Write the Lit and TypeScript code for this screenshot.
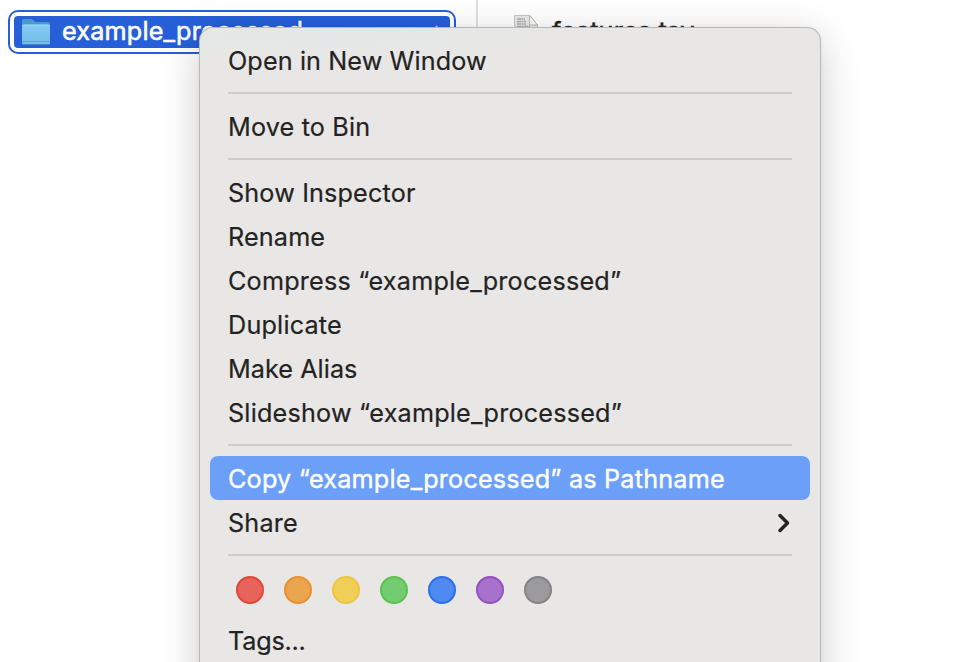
import { LitElement, html, css } from "lit";
import { customElement, property } from "lit/decorators.js";

type Entry = { label: string; spacing?: number; active?: boolean; submenu?: boolean };

const GROUPS: Entry[][] = [
  [{ label: "Open in New Window", spacing: 0.11 }],
  [{ label: "Move to Bin", spacing: 0.17 }],
  [
    { label: "Show Inspector", spacing: 0.15 },
    { label: "Rename", spacing: 0.15 },
    { label: "Compress “example_processed”", spacing: 0.2 },
    { label: "Duplicate", spacing: 0.2 },
    { label: "Make Alias", spacing: 0.05 },
    { label: "Slideshow “example_processed”", spacing: 0.2 },
  ],
  [
    { label: "Copy “example_processed” as Pathname", active: true, spacing: 0.2 },
    { label: "Share", submenu: true, spacing: 0.2 },
  ],
];

@customElement("tag-dots")
class TagDots extends LitElement {
  static styles = css`
    :host { display: flex; gap: 20px; height: 28px; padding: 10px 36px 14px; }
    .dot { width: 28px; height: 28px; box-sizing: border-box; border-radius: 50%; border: 2px solid; }
    .red { background: #e66459; border-color: #e24637; }
    .orange { background: #eba54f; border-color: #e79130; }
    .yellow { background: #efcf58; border-color: #ecc53f; }
    .green { background: #73cc70; border-color: #5bc24d; }
    .blue { background: #4f8af0; border-color: #2c6ef0; }
    .purple { background: #a872cc; border-color: #9550c4; }
    .gray { background: #9b9a9f; border-color: #838387; }
  `;
  render() {
    return ["red", "orange", "yellow", "green", "blue", "purple", "gray"].map(
      (c) => html`<span class="dot ${c}"></span>`
    );
  }
}

@customElement("context-menu")
class ContextMenu extends LitElement {
  @property({ attribute: false }) groups: Entry[][] = [];
  static styles = css`
    :host {
      display: block; box-sizing: border-box; width: 620px; height: 720px; padding-top: 10px;
      border-radius: 13px; color: #232323;
      background: radial-gradient(ellipse 270px 36px at 130px 0, #e4e7e8, #e8e7e500), #e8e7e5;
      box-shadow: 0 0 0 1px #b9b9b9, 0 10px 40px rgba(0, 0, 0, 0.21), 0 0 5px rgba(0, 0, 0, 0.06);
    }
    .row { display: flex; align-items: center; justify-content: space-between; height: 44px; margin: 0 10px; padding: 2px 18px 0; box-sizing: border-box; border-radius: 8px; white-space: pre; -webkit-text-stroke: 0.2px #232323; }
    .active { background: #6b9ff8; color: #fff; -webkit-text-stroke: 0.4px #fff; }
    .line { height: 2px; margin: 10px 28px; background: #cdccca; }
    .chevron { width: 16px; height: 22px; margin: -1px 1px 0 0; }
    .tags { letter-spacing: -0.2px; }
  `;
  render() {
    return html`
      ${this.groups.map(
        (group) => html`
          ${group.map(
            (e) => html`<div class="row ${e.active ? "active" : ""}">
              <span style="letter-spacing:${e.spacing ?? 0}px">${e.label}</span>
              ${e.submenu
                ? html`<svg class="chevron" viewBox="0 0 16 22"><path d="M5 3.500 12.500 11 5 18.500" fill="none" stroke="#232323" stroke-width="3.500" stroke-linecap="round" stroke-linejoin="round" /></svg>`
                : ""}
            </div>`
          )}
          <div class="line"></div>
        `
      )}
      <tag-dots></tag-dots>
      <div class="row"><span class="tags">Tags...</span></div>
    `;
  }
}

@customElement("app-root")
class AppRoot extends LitElement {
  static styles = css`
    :host {
      display: block; position: relative; width: 966px; height: 662px; overflow: hidden;
      background: #fff; color: #232323; font: 25.2px/32px Inter, "Liberation Sans", sans-serif;
    }
    .columns { display: flex; height: 662px; }
    .left { width: 476px; box-sizing: border-box; padding: 10px 20px 0 8px; }
    .right { flex: 1; border-left: 2px solid #dedede; padding: 12px 0 0 34px; }
    .selected { height: 44px; box-sizing: border-box; border: 2px solid #265fd8; border-radius: 10px; padding: 4px; }
    .fill { display: flex; align-items: center; box-sizing: border-box; height: 32px; border-radius: 4px; background: #265fd8; color: #fff; padding: 0 7px; }
    .name { flex: 1; margin: -2px 0 0 11px; letter-spacing: 0.18px; -webkit-text-stroke: 0.6px #fff; }
    .folder { width: 30px; height: 28px; margin-top: -1px; }
    .arrow { width: 8px; height: 14px; }
    .file { display: flex; }
    .doc { width: 28px; height: 34px; margin-top: 2px; }
    .filename { margin: 3px 0 0 12px; letter-spacing: 0.17px; -webkit-text-stroke: 0.5px #232323; }
    context-menu { position: absolute; left: 200px; top: 28px; }
  `;
  render() {
    return html`
      <div class="columns">
        <div class="left">
          <div class="selected"><div class="fill">
            <svg class="folder" viewBox="0 0 30 28">
              <defs><linearGradient id="f" x2="0" y2="1"><stop stop-color="#85cbf3" /><stop offset="1" stop-color="#73bcec" /></linearGradient></defs>
              <path d="M1 25V3q0-2 2-2h7q1 0 2 1l1 1q1 1 2 1h12q2 0 2 2v19z" fill="#479bc9" />
              <rect x="1" y="6.500" width="28" height="20" rx="1.500" fill="url(#f)" />
              <path d="M1.500 7.200H28.500" stroke="#a0d8f5" />
              <path d="M1 23.500H29" stroke="#5ba7d8" />
              <path d="M2 26.500H28" stroke="#4389bc" />
            </svg>
            <span class="name">example_processed</span>
            <svg class="arrow" viewBox="0 0 8 14"><path d="M1 1 6 7 1 13" fill="none" stroke="#b7ccf7" stroke-width="2" /></svg>
          </div></div>
        </div>
        <div class="right">
          <div class="file">
            <svg class="doc" viewBox="0 0 28 34">
              <path d="M2.500 1.500H18L25.500 11V33H2.500z" fill="#e9e9e9" stroke="#c4c4c4" />
              <path d="M5 5h8M5 7.500h9M5 10h9M5 12.500h13" stroke="#adadad" stroke-width="1.500" stroke-dasharray="4 0.500 2 0.500" />
              <path d="M17.500 1.500V11H25.500z" fill="#fafafa" stroke="#b8b8b8" />
            </svg>
            <span class="filename">features.tsv</span>
          </div>
        </div>
      </div>
      <context-menu .groups=${GROUPS}></context-menu>
    `;
  }
}
